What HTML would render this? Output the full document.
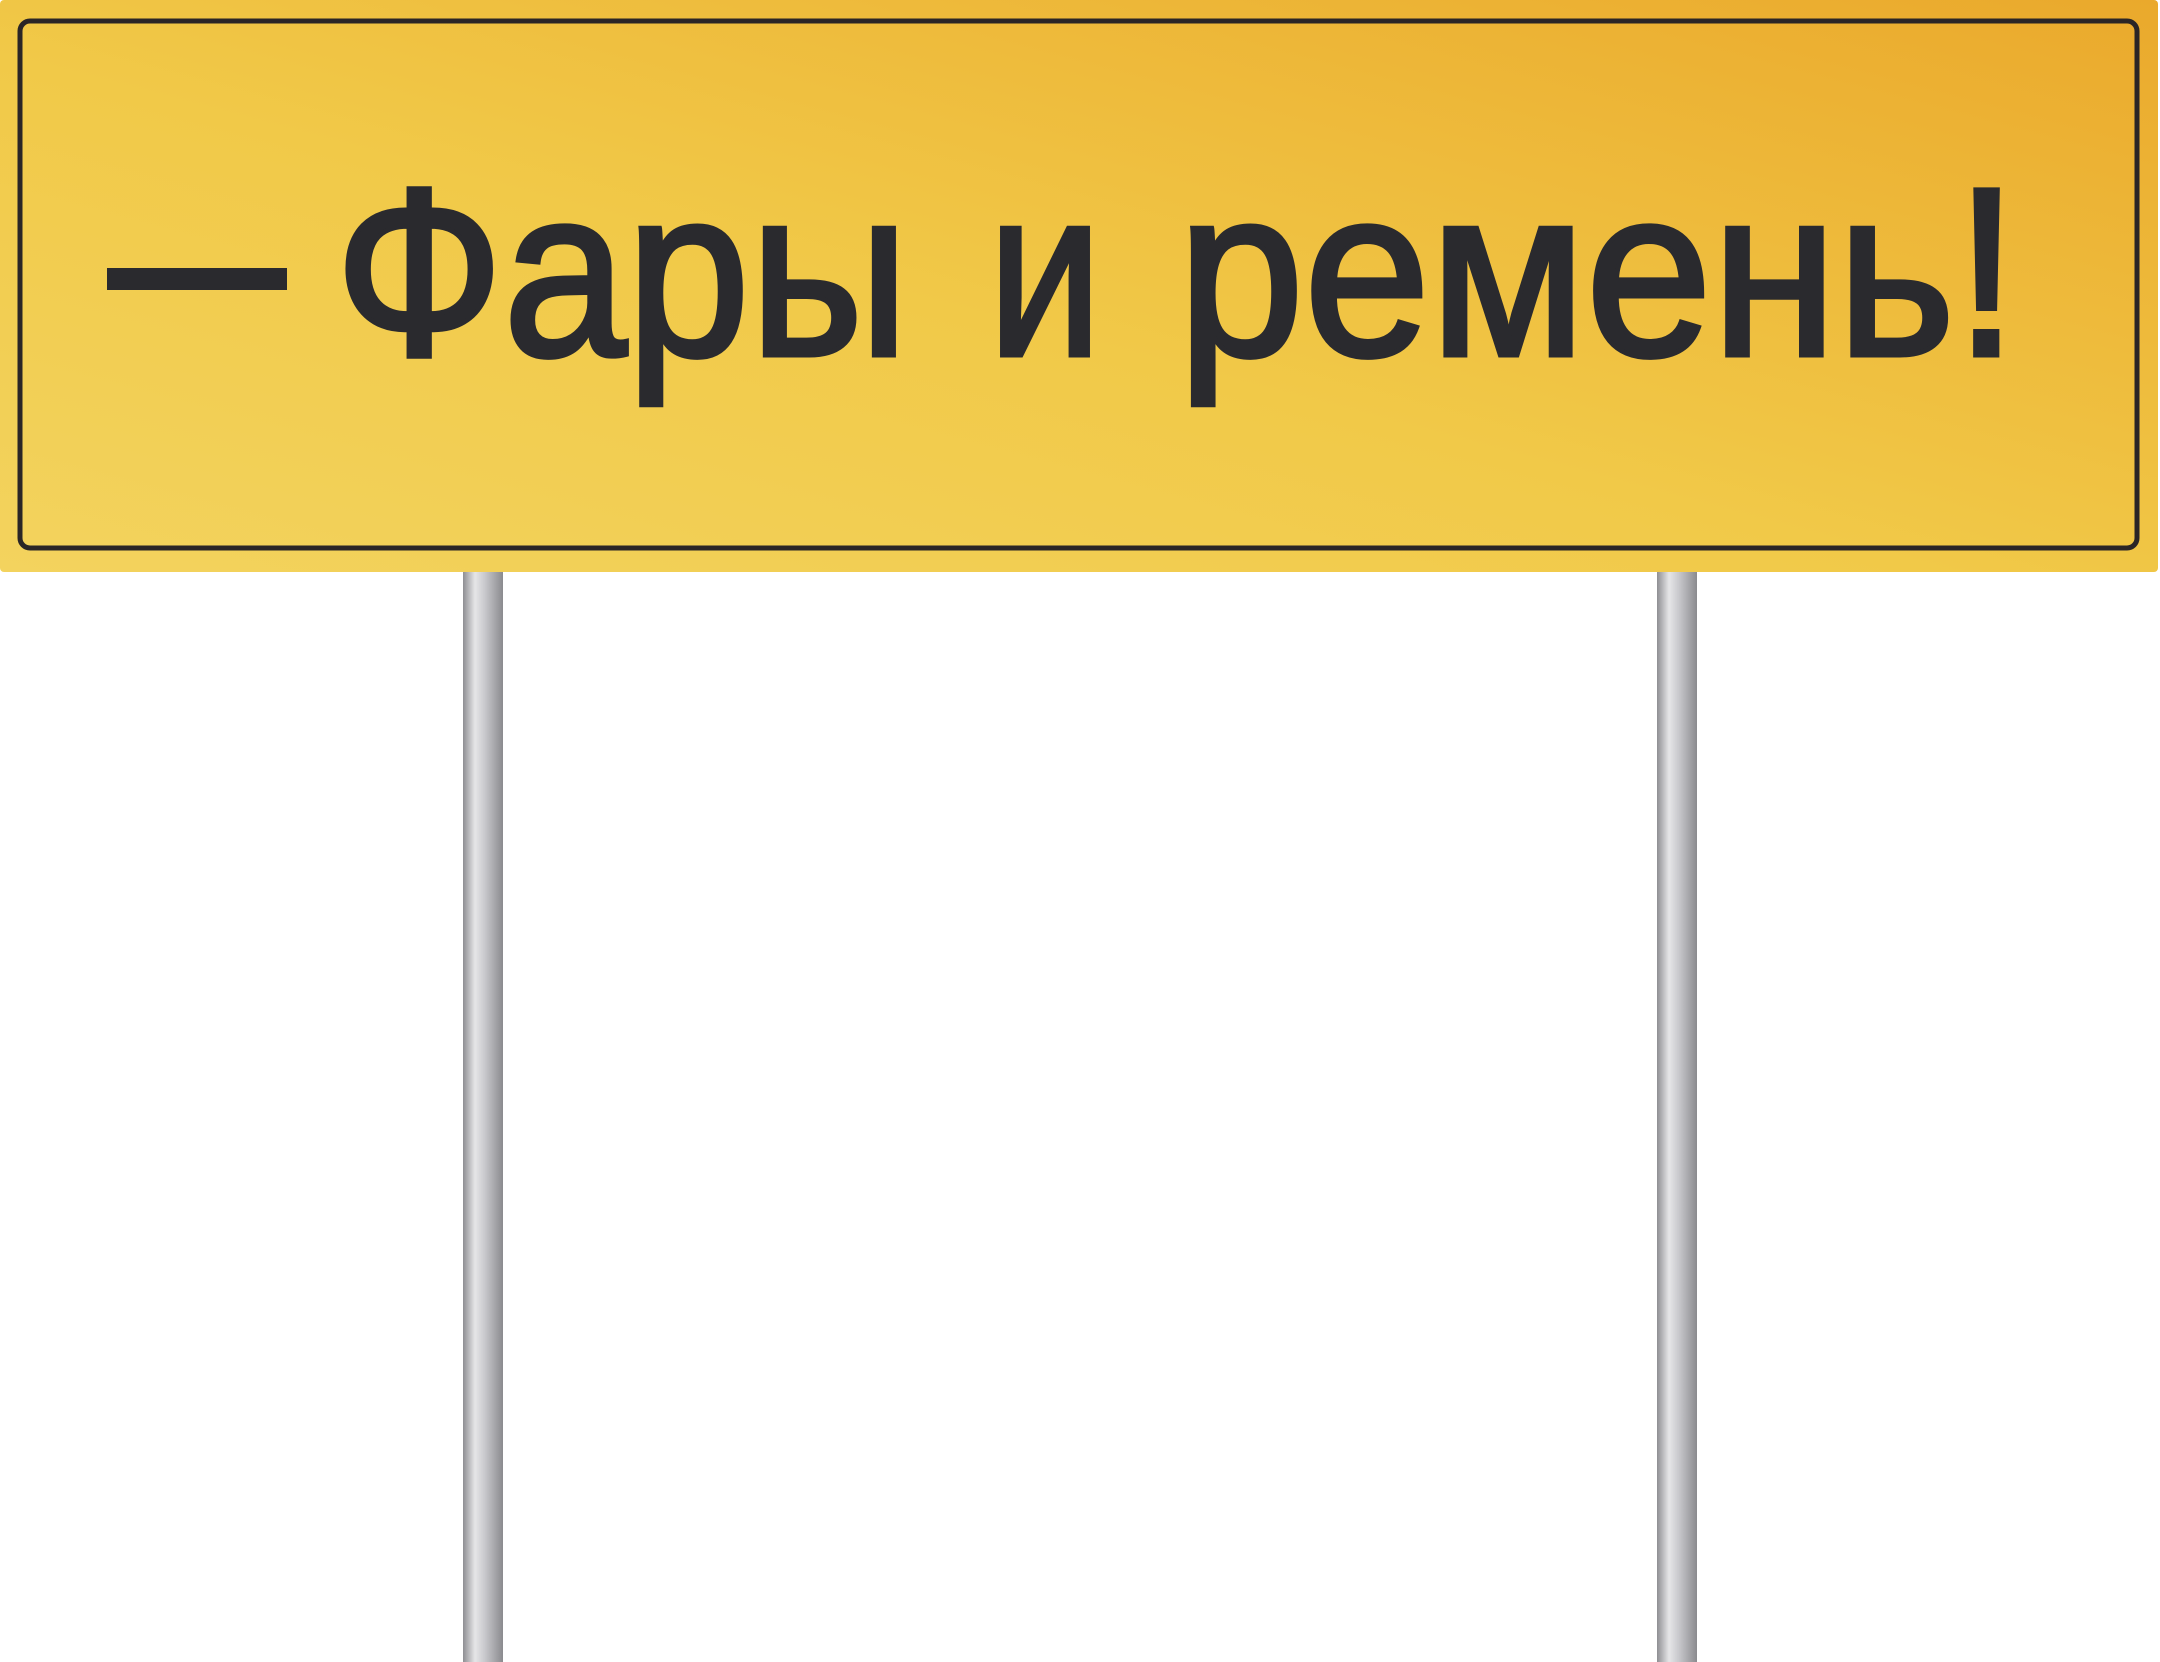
<!DOCTYPE html>
<html><head><meta charset="utf-8"><style>
html,body{margin:0;padding:0;background:#fff;width:2160px;height:1662px;overflow:hidden}
</style></head><body>
<svg width="2160" height="1662" viewBox="0 0 2160 1662" xmlns="http://www.w3.org/2000/svg">
<defs>
<linearGradient id="g" x1="0" y1="1" x2="1" y2="0">
<stop offset="0" stop-color="#f3d35e"/>
<stop offset="0.45" stop-color="#f1c948"/>
<stop offset="1" stop-color="#eaa92c"/>
</linearGradient>
<linearGradient id="p" x1="0" y1="0" x2="1" y2="0">
<stop offset="0" stop-color="#8e8e92"/>
<stop offset="0.3" stop-color="#e6e6e8"/>
<stop offset="0.55" stop-color="#c8c8cc"/>
<stop offset="1" stop-color="#8a8a8e"/>
</linearGradient>
</defs>
<rect x="463" y="560" width="40" height="1102" fill="url(#p)"/>
<rect x="1657" y="560" width="40" height="1102" fill="url(#p)"/>
<rect x="0" y="0" width="2158" height="572" rx="4" fill="url(#g)"/>
<rect x="20" y="21" width="2117" height="527" rx="10" fill="none" stroke="#2a2526" stroke-width="5"/>
<rect x="107" y="268" width="180" height="22" fill="#2a2a2e"/>
<g font-family="Liberation Sans, DejaVu Sans, sans-serif" font-size="240" fill="#2a2a2e" stroke="#2a2a2e" stroke-width="5">
<text x="335" y="355" textLength="574" lengthAdjust="spacingAndGlyphs">Фары</text>
<text x="988" y="355" textLength="114" lengthAdjust="spacingAndGlyphs">и</text>
<text x="1178" y="355" textLength="840" lengthAdjust="spacingAndGlyphs">ремень!</text>
</g>
</svg>
</body></html>
